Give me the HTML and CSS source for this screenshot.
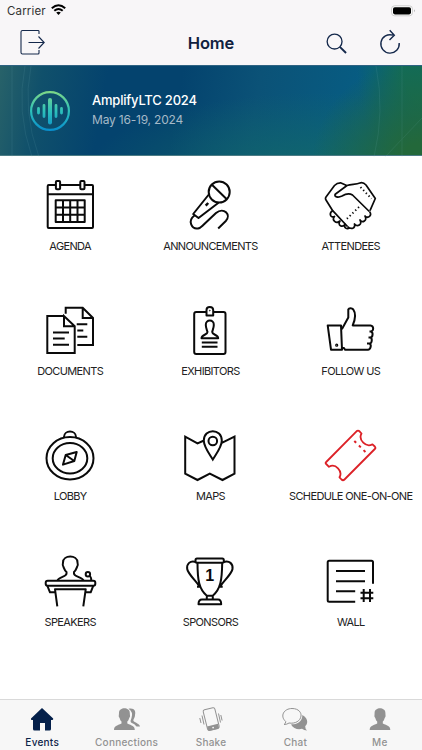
FILE: index.html
```html
<!DOCTYPE html>
<html lang="en">
<head>
<meta charset="utf-8">
<meta name="viewport" content="width=device-width">
<title>Home</title>
<link rel="stylesheet" href="styles.css">
</head>
<body>
  <div class="app">
    <header>
      <div class="status">
        <span>Carrier</span>
        <svg class="wifi" width="15" height="12" viewBox="0 0 15 12"><path d="M.8 4.3Q7.500-1.700 14.200 4.300M3.300 6.800Q7.500 3.200 11.700 6.800" fill="none" stroke="#000" stroke-width="2"/><path d="M5.200 8.600Q7.500 6.900 9.800 8.600L7.500 11Z"/></svg>
        <svg class="battery" width="25" height="12" viewBox="0 0 25 12"><rect x=".6" y=".8" width="20.800" height="10" rx="3" fill="#fff" stroke="#ccc"/><rect x="2" y="2.200" width="18" height="7.200" rx="1.800"/><path d="M23 4.300q1.500 1.500 0 3z" fill="#999"/></svg>
      </div>
      <nav class="navbar">
        <svg class="exit" width="26" height="26" viewBox="0 0 26 26"><path d="M19 5V2.300Q19 1.500 18 1.500H2.500Q1 1.500 1 3V23.500Q1 25 2.500 25H18Q19 25 19 24V21M8.500 13.500H24M18.500 7.500L24.200 13.500L18.500 19.500"/></svg>
        <h1>Home</h1>
        <svg class="search" width="21" height="21" viewBox="0 0 22 22"><circle cx="9" cy="9" r="7.800"/><path d="M14.500 14.500L21 21" stroke-width="2"/></svg>
        <svg class="reload" width="22" height="25" viewBox="0 0 22 25"><path d="M20.200 14A9.200 9.200 0 1 1 14 6.200M10.700 1.300L15.300 6.200L10.500 11"/></svg>
      </nav>
    </header>

    <section class="banner">
      <svg class="rings" width="422" height="91" viewBox="0 0 422 91"><path d="M25 0Q16 45 32 91M31 0Q22 45 39 91M12 0V91M374 91Q385 45 376 0M402 0V91M385 91L422 52"/></svg>
      <svg class="logo" width="40" height="40" viewBox="0 0 40 40">
        <defs><linearGradient id="wave" gradientUnits="userSpaceOnUse" x1="0" y1="0" x2="0" y2="40"><stop offset="0" stop-color="#7fd885"/><stop offset=".5" stop-color="#2dc0ba"/><stop offset="1" stop-color="#078dcd"/></linearGradient></defs>
        <g fill="none" stroke="url(#wave)" stroke-linecap="round"><circle cx="20" cy="20" r="18.900" stroke-width="2.200"/><path stroke-width="2.800" d="M8.500 17.500v4.500M14 14.500v11M26 14.500v11M31.500 17.500v4.500"/><path stroke-width="4" d="M20.010 9v22.500"/></g>
      </svg>
      <div class="event">
        <h2>AmplifyLTC 2024</h2>
        <p>May 16-19, 2024</p>
      </div>
    </section>

    <main class="grid">
      <div class="item">
        <svg viewBox="0 0 54 54"><rect x="4.700" y="6" width="45.300" height="43" rx="1"/><path d="M4.700 15.300H50M12.700 21.300H41.700V43H12.700ZM20 21.300V43M27.200 21.300V43M34.500 21.300V43M12.700 28.500H41.700M12.700 35.800H41.700"/><rect x="12.900" y="2" width="4.200" height="8.300" rx="1" fill="#fff"/><rect x="37.300" y="2" width="4.200" height="8.300" rx="1" fill="#fff"/></svg>
        <span>AGENDA</span>
      </div>
      <div class="item">
        <svg viewBox="0 0 54 54"><circle cx="36.200" cy="13" r="10.500"/><path d="M29.200 6L43.800 20.300M25.800 15.500L10.200 35L15.500 39L35.500 23.700M11.500 36.500C4 42 9 50.500 15 49.500C17 49.200 18 48.200 20 46.300L33 34C41 27.500 48.500 36 42.800 42L35.200 49.500"/><path d="M25.200 24L22.700 26.700" stroke-width="2.500"/></svg>
        <span>ANNOUNCEMENTS</span>
      </div>
      <div class="item">
        <svg viewBox="0 0 54 54"><g stroke-width="1.700"><path d="M8.700 31.700L2 21Q1 19.500 2 18L10.500 6.500Q13 3.800 16.500 3.800L22.700 6.500M8.700 31.700L23.500 47.500M46 31.700L51.300 19.500L42 6Q39.500 3.300 36.700 3.800C31 5.700 28 5 23 6.500L11.200 15.200C10 18 14 19 18 17C22 14.500 25.500 14 28.500 16L45.300 32.500"/><path d="M45.500 32.500C48.500 36.500 44 40 41 37C43.500 41.500 38.500 44.500 36 41C38.500 45.500 33.500 48.500 30.500 45C32 49.500 27 51 23.500 47.500M8.700 31.700C4.500 34 6.500 39.500 10.500 37.500C7.500 41 12 45.500 16 42C13 46.500 18.500 49 21 45.300C19.500 49 23 50.500 25.500 49"/></g><path d="M36.500 8.200L47.500 19.600M35 28L22.500 40.200" stroke-width="1.900" stroke-dasharray="1.300 2.600"/></svg>
        <span>ATTENDEES</span>
      </div>
      <div class="item">
        <svg viewBox="0 0 54 54"><path stroke-linejoin="miter" d="M21 12H4.300V49H31.700V22.300L21 12V22.300H31.700M10 28.400H26M10 34.400H21.700M10 40.700H26M22.700 9.700V3.700H39.700L50 14V41H34.300M39.700 3.700V14H50M33.700 20.200H44.300M34.300 26.400H40.300M34.300 32.700H44.300"/></svg>
        <span>DOCUMENTS</span>
      </div>
      <div class="item">
        <svg viewBox="0 0 54 54"><rect x="11.200" y="8" width="31.300" height="42" rx="2"/><path d="M23.500 11.400V6Q23.500 3 26.800 3T30.200 6V11.400Z" fill="#fff"/><circle cx="26.800" cy="6.600" r=".4" stroke-width="1"/><path d="M18.500 34.200C18.500 30.500 24.500 31 24.500 28C24 26 22.800 24 22.800 21C22.500 15 31.200 15 30.800 21C30.800 24 29.600 26 29.200 28C29.200 31 35.200 30.500 35.200 34.200ZM18.800 38.500H34.500M18.800 42.700H34.500"/></svg>
        <span>EXHIBITORS</span>
      </div>
      <div class="item">
        <svg viewBox="0 0 54 54"><path d="M3.700 21.400H17L18 45.700H7ZM18 25L24.300 13.500V5.500C25 3.800 28 4 29.300 5.500C32.500 10 31 16 28.700 21.400H46.500C50 21.800 50 27 46.800 27.400H45.500M46.800 27.400C49.500 28 49 33.500 46.200 33.600H44.500M46.200 33.600C48.500 34 48.300 39.500 45.400 39.600H43M45.400 39.600C48 40.500 46.500 45.700 44 45.700H21L20 44H18"/><circle cx="12.700" cy="41.200" r=".6"/></svg>
        <span>FOLLOW US</span>
      </div>
      <div class="item">
        <svg viewBox="0 0 54 54"><ellipse cx="27" cy="29.300" rx="23.500" ry="21.300"/><ellipse cx="27" cy="29.300" rx="17.300" ry="15.200"/><path d="M21 8C21 .8 33 .8 33 8M33.700 23L31.300 32L20 35.600L22.700 26ZM22.700 26L31.300 32"/></svg>
        <span>LOBBY</span>
      </div>
      <div class="item">
        <svg viewBox="0 0 54 54"><path stroke-linejoin="miter" d="M21 11.500L14.500 14.300L2.200 7.600V44.600L14.500 51L26.800 44.600L39.500 51L51.500 44.600V7.600L38.800 13.800M29.800 30.600C26.500 25 20.800 18 20.800 11.500C20.800-1 38.800-1 38.800 11.500C38.800 18 33.100 25 29.800 30.600Z"/><circle cx="29.800" cy="12" r="4.300"/></svg>
        <span>MAPS</span>
      </div>
      <div class="item">
        <svg class="red" viewBox="0 0 54 54"><path stroke-width="1.800" d="M2.200 33L32.500 2.300Q34 1 35.500 2.300L37.500 4.500C34 11 42 19 48.500 15.300L50.800 17.500Q52 19 50.800 20L20.500 50.500Q19 52 17.500 50.500L15.500 48.300C19 42 11.500 34 5 37.800L2.200 35Q1 34 2.200 33Z"/><path d="M30.300 12L42 23.500" stroke-dasharray="2.600 3.900"/></svg>
        <span>SCHEDULE ONE-ON-ONE</span>
      </div>
      <div class="item">
        <svg viewBox="0 0 54 54"><rect x="2.700" y="25.700" width="49.600" height="5" rx="2"/><path d="M4.300 30.700L7 37.300H11.500M50.300 30.700L47.700 37.300H43.200M14.300 51.300L12 34.300H42.700L40.300 51.300M14.500 25.500C16 21.500 23.500 22 23.500 18.500V17C21.500 15.500 21.200 13.500 20.500 12C19.200 10.500 19.600 9 20 7.500C20-.5 34.500-.5 34.500 7.500C35 9 35.300 10.500 34 12C33.300 13.500 33 15.500 31 17V18.500C31 22 39 21.500 40.500 25.500M47 21Q48.500 23 48.300 25.700"/><circle cx="44.900" cy="19.200" r="2.200"/></svg>
        <span>SPEAKERS</span>
      </div>
      <div class="item">
        <svg viewBox="0 0 54 54"><rect x="12.500" y="3.500" width="28.300" height="4.200" rx="1.500"/><path d="M14.500 7.700C14.500 25 16 34.500 23.800 40.700H29.800C37.500 34.500 39 25 39.200 7.700M13 7C7 5 3.500 9 4.200 14C5 19 14 27 16.500 31.700H14M40.500 7C46.500 5 50.200 9 49.500 14C48.700 19 39.700 27 37.200 31.700H39.700M23.800 40.700V44.500M29.800 40.700V44.500M15.500 49.200C15.500 46 16.500 44.500 19 44.500H35C37.300 44.500 38.200 46 38.200 49.200Z"/><text x="26.800" y="26.200">1</text></svg>
        <span>SPONSORS</span>
      </div>
      <div class="item">
        <svg viewBox="0 0 54 54"><path d="M49 28.800V7.200Q49 5.700 47.500 5.700H5.200Q3.700 5.700 3.700 7.200V45.200Q3.700 46.700 5.200 46.700H31.200M12 16H41M12 26.300H41M12 36.300H31.200M39.700 34V47M46 34V47M36.500 37.700H49.300M36.500 43.300H49.300"/></svg>
        <span>WALL</span>
      </div>
    </main>

    <footer class="tabs">
      <a class="tab active">
        <svg viewBox="0 0 26 26"><path d="M13 2L24.200 12.500Q24.500 14 23 14H22V23Q22 24.500 20.500 24.500H16V17H11V24.500H5.500Q4 24.500 4 23V14H3Q1.500 14 2 12.500Z"/></svg>
        Events
      </a>
      <a class="tab">
        <svg viewBox="0 0 26 26"><path d="M14.500 2.800C20.500 1.500 22 5.500 21 9C21 12 19 13 19.500 15C21.500 17 25.500 17.500 26 20.500H22.500Q21 18 17 16.500Q16 15 17.500 12Q19.500 6 14.500 2.800Z"/><path d="M0 24C0 20 3 19.500 7.500 17.500V15.500C5.800 14 6 12.500 5.300 11.500C4.300 10.500 5 9 5 7C5 .8 15.800 .8 15.800 7C15.800 9 16.500 10.500 15.500 11.500C14.800 12.500 15 14 13.300 15.500V17.500C17.800 19.500 20.800 20 20.800 24Z"/></svg>
        Connections
      </a>
      <a class="tab">
        <svg viewBox="0 0 26 26"><g fill="none" stroke="#929292"><rect x="7.200" y="2.500" width="12" height="21" rx="1.700" transform="rotate(-14 13.200 13)"/><path d="M4 9.500L6 18.500M1.800 12L3 17M20.500 7.500L22.500 16.500M22.800 9L24.100 14.500"/></g><path d="M9 20.500L20 17.700L21 21.500Q21 22.500 20 23L11.500 25Q10.300 25.200 9.900 24Z"/><circle cx="15.100" cy="21.600" r=".9" fill="#f7f7f7"/></svg>
        Shake
      </a>
      <a class="tab">
        <svg viewBox="0 0 26 26"><path d="M10 18.300C16 18 20.500 15 20.300 9C26.500 12 26 18 23.300 20Q23 23 25 24.500Q22 24.500 20 22.800C16 24 11 22.500 9 18.500Z"/><path fill="none" stroke="#929292" d="M2 18.500Q4 17.500 3.700 15.500C-2.500 10 2 2.500 10 2.500C17 2.500 19.500 7 19 10C18.500 15 13 18 7 17Q5 18.500 2 18.500Z"/></svg>
        Chat
      </a>
      <a class="tab">
        <svg viewBox="0 0 26 26"><path d="M2.700 24C2.700 20 5.700 19.500 10.200 17.500V15.500C8.500 14 8.700 12.500 8 11.500C7 10.500 7.600 9 7.600 7C7.600 .8 18.400 .8 18.400 7C18.400 9 19 10.500 18 11.500C17.300 12.500 17.500 14 15.800 15.500V17.500C20.300 19.500 23.300 20 23.300 24Z"/></svg>
        Me
      </a>
    </footer>
  </div>
</body>
</html>
```
FILE: styles.css
```css
body {
  margin: 0;
  background: #fff;
  font-family: Inter, "Liberation Sans", sans-serif;
}

h1, h2, p {
  margin: 0;
}

svg {
  display: block;
  flex: none;
}

.app {
  display: flex;
  flex-direction: column;
  width: 422px;
  height: 750px;
  overflow: hidden;
}

header {
  height: 65px;
  background: #f8f6f8;
}

.status {
  display: flex;
  align-items: center;
  height: 22px;
  padding: 0 6px 0 7px;
  font-size: 11.5px;
  letter-spacing: .15px;
  color: #333;
}

.wifi {
  margin: -2px 0 0 5px;
}

.battery {
  margin: -1px 0 0 auto;
}

.navbar {
  display: grid;
  grid-template-columns: 100px 222px 50px 50px;
  align-items: center;
  height: 42px;
}

.navbar svg {
  fill: none;
  stroke: #14284b;
  stroke-width: 1.4;
}

.navbar .exit {
  margin: -2px 0 0 20px;
  stroke-width: 1.1;
}

.navbar .search {
  margin-left: 4px;
}

.navbar .reload {
  margin: -4px 0 0 7px;
}

h1 {
  font-size: 16.5px;
  font-weight: 600;
  text-align: center;
  letter-spacing: -.1px;
  color: #10213f;
}

.banner {
  position: relative;
  display: flex;
  align-items: center;
  gap: 22px;
  height: 91px;
  padding-left: 30px;
  box-sizing: border-box;
  border-top: 1px solid #2f6383;
  border-bottom: 1px solid #4c7c85;
  color: #fff;
  background:
    radial-gradient(ellipse 110px 105px at 100% 110%, #23683a 20%, rgba(30, 104, 65, 0) 100%),
    radial-gradient(ellipse 65px 110px at 100% 0%, #126b58 30%, rgba(18, 107, 88, 0) 100%),
    radial-gradient(ellipse 230px 80px at 75% 120%, rgba(18, 105, 105, .9), rgba(18, 105, 105, 0)),
    linear-gradient(100deg, #286269 0%, #10506b 10%, #04436e 25%, #04436e 42%, #0b5277 60%, #075d83 85%);
}

/* faint arcs behind the title */
.rings {
  position: absolute;
  left: 0;
  top: 0;
  fill: none;
  stroke: #8ac5cc;
  opacity: .1;
}

.event {
  padding-bottom: 2px;
}

h2 {
  font-size: 13px;
  font-weight: 500;
  line-height: 19px;
  letter-spacing: -.2px;
}

.banner p {
  font-size: 12px;
  line-height: 19px;
  letter-spacing: -.2px;
  color: #a5b9c7;
}

.grid {
  display: grid;
  grid-template-columns: repeat(3, 140.3px);
  grid-auto-rows: 125.2px;
  flex: 1;
  padding-top: 23px;
}

.item {
  display: flex;
  flex-direction: column;
  align-items: center;
}

.item svg {
  width: 54px;
  height: 54px;
  fill: none;
  stroke: #0a0a0a;
  stroke-width: 2;
  stroke-linejoin: round;
}

.item .red {
  stroke: #dc2127;
}

.item text {
  font: bold 16px "Liberation Sans", sans-serif;
  text-anchor: middle;
  fill: #0a0a0a;
  stroke: none;
}

.item span {
  margin-top: 5px;
  font-size: 11px;
  line-height: 16px;
  letter-spacing: -.63px;
  white-space: nowrap;
  color: #222;
}

.tabs {
  display: flex;
  height: 50px;
  border-top: 1px solid #d9d9d9;
  background: #f7f7f7;
}

.tab {
  display: flex;
  flex: 1;
  flex-direction: column;
  align-items: center;
  padding-top: 6px;
  font-size: 10px;
  font-weight: 500;
  line-height: 18px;
  letter-spacing: .25px;
  color: #929292;
}

.tab svg {
  width: 26px;
  height: 26px;
  margin-bottom: 1px;
  fill: #929292;
}

.tab.active {
  color: #0d2348;
}

.tab.active svg {
  fill: #04204a;
}
```
